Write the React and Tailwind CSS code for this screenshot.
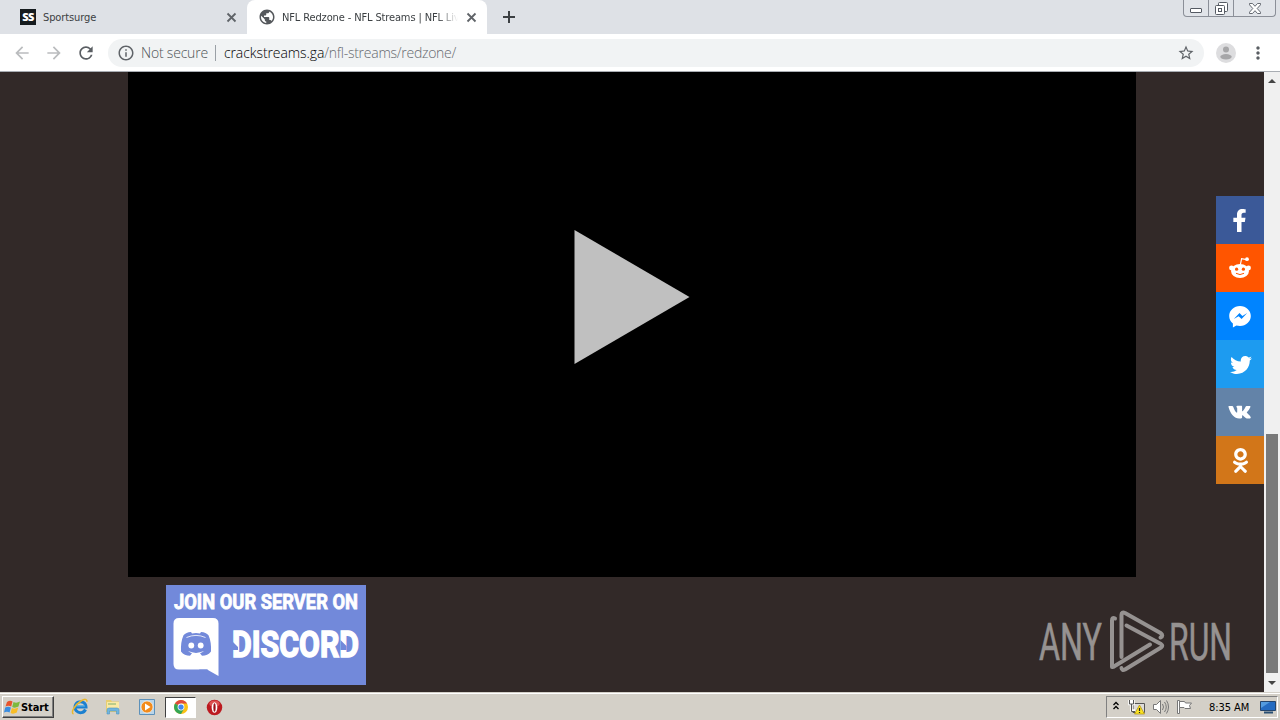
import { FaFacebookF, FaOdnoklassniki, FaTwitter } from "react-icons/fa";
import { MdArrowBack, MdArrowForward, MdInfoOutline, MdMoreVert, MdPublic, MdRefresh, MdStarBorder } from "react-icons/md";

function CloseIcon() {
  return (
    <svg viewBox="0 0 13 13" className="ml-auto h-[13px] w-[13px] shrink-0" stroke="#5f6368" strokeWidth="1.800">
      <path d="M2.500 2.500l8 8M10.500 2.500l-8 8" />
    </svg>
  );
}

function RedditIcon() {
  return (
    <svg viewBox="0 0 24 24" className="h-6 w-6" fill="#fff">
      <ellipse cx="12" cy="15" rx="9" ry="7" />
      <circle cx="3.500" cy="12" r="2.400" />
      <circle cx="20.500" cy="12" r="2.400" />
      <circle cx="19" cy="3.200" r="1.900" />
      <path d="M12.300 9l1.300-6.300 5 1" fill="none" stroke="#fff" strokeWidth="1.200" />
      <circle cx="8.600" cy="13.200" r="1.600" fill="#ff5500" />
      <circle cx="15.400" cy="13.200" r="1.600" fill="#ff5500" />
      <path d="M8.300 17.500q3.700 2.400 7.400 0" fill="none" stroke="#ff5500" strokeLinecap="round" />
    </svg>
  );
}

function MessengerIcon() {
  return (
    <svg viewBox="0 0 24 24" className="h-6 w-6">
      <path d="M12 2C6 2 1.200 6.500 1.200 12c0 3 1.400 5.700 3.700 7.500v4l3.500-2c1.100.3 2.400.5 3.600.5 6 0 10.800-4.500 10.800-10S18 2 12 2z" fill="#fff" />
      <path d="M5.800 15l5.700-6 2.900 2.900L19.200 9l-5.600 6.100-3-2.900z" fill="#0084ff" />
    </svg>
  );
}

function VkIcon() {
  return (
    <svg viewBox="0 0 24 14" className="h-[14px] w-6">
      <path
        fill="#fff"
        d="M12.9 13.4h-1.8C6.500 13.400 2.700 9.500.5 2c-.1-.5.100-.9.700-.9h3c.5 0 .8.200 1 .7 1 2.900 2.200 4.900 3.300 5.700.4.300.7.100.7-.5V3.600c0-1-.4-1.300-1-1.600.2-.8 1-1.300 2-1.300h3c.7 0 .9.400.9 1.100v3.900c0 .5.400.6.800.2 1.100-1.100 2-2.500 2.700-4.100.2-.5.500-.7 1-.7h3c.8 0 1 .4.700 1.100-.7 1.600-1.800 3.200-3.200 4.800-.4.500-.3.700 0 1.100 1.300 1.200 2.800 2.500 3.500 3.900.4.800.1 1.400-.8 1.400h-3.100c-.7 0-1.100-.3-1.600-.8l-1.900-1.900c-.6-.6-1.100-.5-1.100.3v1.300c0 .7-.3 1.100-1.200 1.100z"
      />
    </svg>
  );
}

const shareLinks = [
  { name: "Facebook", color: "bg-[#3b5998]", icon: <FaFacebookF size={23} className="mr-[2px]" /> },
  { name: "Reddit", color: "bg-[#ff5500]", icon: <RedditIcon /> },
  { name: "Messenger", color: "bg-[#0084ff]", icon: <MessengerIcon /> },
  { name: "Twitter", color: "bg-[#1d9bf0]", icon: <FaTwitter size={22} className="ml-[2px] mt-[2px]" /> },
  { name: "VK", color: "bg-[#6383a8]", icon: <VkIcon /> },
  { name: "Odnoklassniki", color: "bg-[#d27619]", icon: <FaOdnoklassniki size={25} /> },
];

function WindowButtons() {
  return (
    <div className="ml-auto mr-[4px] flex h-[17px] w-[93px] rounded-b-[4px] border border-t-0 border-[#8b8f98] bg-[#e1e4e9]">
      <div className="flex w-[25px] items-end justify-center border-r border-[#8b8f98] pb-[3px]">
        <span className="h-[5px] w-[12px] rounded-[1px] border border-[#555a63] bg-white" />
      </div>
      <div className="flex w-[25px] items-center justify-center border-r border-[#8b8f98]">
        <svg viewBox="0 0 13 13" className="h-[13px] w-[13px]" fill="#fff" stroke="#555a63">
          <rect x="3.500" y="0.500" width="9" height="9" rx="1" />
          <rect x="0.500" y="3.500" width="9" height="9" rx="1" />
          <rect x="3.500" y="6.500" width="3" height="3" />
        </svg>
      </div>
      <div className="flex flex-1 items-center justify-center">
        <svg viewBox="0 0 12 11" className="h-[11px] w-3" fill="#fff" stroke="#555a63" strokeWidth="0.9">
          <path d="M.5.5h3L6 3.300 8.500.5h3v1.300L8.200 5.500l3.300 3.700v1.300h-3L6 7.700 3.500 10.500h-3V9.200l3.300-3.700L.5 1.800z" />
        </svg>
      </div>
    </div>
  );
}

function TabStrip() {
  return (
    <div className="flex h-[34px] bg-[#dee1e6] font-['DejaVu_Sans_Condensed','DejaVu_Sans',sans-serif] text-[11px] text-[#3c4043]">
      <div className="flex w-[247px] items-center pl-[20px] pr-[9px]">
        <span className="flex h-4 w-4 items-center justify-center bg-[#151b1e] font-['Open_Sans',sans-serif] text-[11px] font-extrabold tracking-[-0.5px] text-white">SS</span>
        <span className="ml-[7px] pt-[2px] tracking-[-0.1px]">Sportsurge</span>
        <CloseIcon />
      </div>
      <div className="flex w-[240px] items-center rounded-t-[8px] bg-white pl-[11px] pr-[9px]">
        <MdPublic size={18} className="shrink-0 text-[#55585c]" />
        <span className="ml-[6px] w-[176px] whitespace-nowrap pt-[2px] tracking-[-0.13px] [mask-image:linear-gradient(to_right,black_155px,transparent_176px)]">
          NFL Redzone - NFL Streams | NFL Liv
        </span>
        <CloseIcon />
      </div>
      <div className="flex items-center pl-4">
        <svg viewBox="0 0 12 12" className="h-3 w-3" stroke="#3c4043" strokeWidth="2">
          <path d="M6 0v12M0 6h12" />
        </svg>
      </div>
      <WindowButtons />
    </div>
  );
}

function Toolbar() {
  return (
    <div className="flex h-[38px] items-center border-b border-[#a9adb3] bg-white">
      <MdArrowBack size={20} className="ml-[12px] text-[#babcbe]" />
      <MdArrowForward size={20} className="ml-[12px] text-[#babcbe]" />
      <MdRefresh size={20} className="ml-[12px] text-[#5a5e63]" />
      <div className="ml-[12px] flex h-7 w-[1096px] items-center rounded-full bg-[#f1f3f4] pl-[9px] pr-[9px] font-['Open_Sans',sans-serif] text-[14px] font-light">
        <MdInfoOutline size={18} className="text-[#5f6368]" />
        <span className="ml-[6px] -mt-px tracking-[-0.2px] text-[#4f5357]">Not secure</span>
        <span className="ml-[7px] h-4 w-px bg-[#9aa0a6]" />
        <span className="ml-[8px] -mt-px tracking-[-0.26px] text-[#666a6f]">
          <span className="tracking-[-0.08px] text-black">crackstreams.ga</span>/nfl-streams/redzone/
        </span>
        <MdStarBorder size={18} className="ml-auto text-[#5f6368]" />
      </div>
      <svg viewBox="0 0 20 20" className="ml-[12px] h-5 w-5">
        <circle cx="10" cy="10" r="10" fill="#dddddf" />
        <circle cx="10" cy="6.500" r="3" fill="#a6a6a8" />
        <ellipse cx="10" cy="13.800" rx="5.700" ry="2.700" fill="#a6a6a8" />
      </svg>
      <MdMoreVert size={20} className="ml-[12px] text-[#5a5e63]" />
    </div>
  );
}

function DiscordBanner() {
  return (
    <svg viewBox="0 0 200 100" className="ml-[166px] mt-2 h-[100px] w-[200px] overflow-visible bg-[#7289da]">
      <g fill="#fff" stroke="#fff" className="font-['Roboto',sans-serif] font-bold">
        <text x="8" y="24" fontSize="21" strokeWidth="0.800" textLength="184" lengthAdjust="spacingAndGlyphs">JOIN OUR SERVER ON</text>
        <text x="66" y="71.500" fontSize="36" strokeWidth="1.500" textLength="127" lengthAdjust="spacingAndGlyphs">DISCORD</text>
      </g>
      <path fill="#fff" d="M13 33h34q5.500 0 5.500 5.500V91L41 84.500H13q-5.500 0-5.500-5.500V38.500Q7.500 33 13 33z" />
      <path fill="#7289da" d="M39 84.500h2.500L43 87v5l-10-7.500z" />
      {/* mascot */}
      <path
        fill="#7289da"
        d="M25 47q-5 .3-7.500 3.200Q14.500 57 15 66.500q3.300 4.300 9 4.300l2-2.600q-2.400-.7-4-2.100 8 3.600 16 0-1.600 1.400-4 2.100l2 2.600q5.700 0 9-4.300.5-9.500-2.500-16.300Q40 47.300 35 47l-1 1.400q-4-.6-8 0z"
      />
      <path d="M20.500 52.500q9.500-4.200 19 0" fill="none" stroke="#fff" strokeWidth=".8" />
      <circle cx="25.300" cy="60.500" r="2.900" fill="#fff" />
      <circle cx="34.700" cy="60.500" r="2.900" fill="#fff" />
      {/* stencil cuts in the first and last letter */}
      <path fill="#7289da" d="M65 55l7 7v3h-7zM174.500 55l6 6v4h-6z" />
    </svg>
  );
}

function AnyRunLogo() {
  return (
    <svg viewBox="0 0 194 64" className="ml-auto mr-[32px] mt-[33px] h-16 w-[194px] overflow-visible" fill="none" stroke="#969291">
      <g fill="#969291" strokeWidth="0.600" className="font-['Roboto',sans-serif]" fontSize="52">
        <text x="1" y="49.500" textLength="63" lengthAdjust="spacingAndGlyphs">ANY</text>
        <text x="131" y="49.500" textLength="63" lengthAdjust="spacingAndGlyphs">RUN</text>
      </g>
      <g strokeWidth="4" strokeLinecap="round" strokeLinejoin="round">
        <path d="M77 8.500q-3-1.500-3 2V57l1.500-.3L112 34.500" />
        <path d="M83.500 47V5q0-3.500 3.500-2l35.500 20q3.500 2.500 0 4.500" />
        <path d="M88.500 15.500L123 34q2.500 1.800 0 3.500L87 59.500q-3 1.500-3.500-1.500" />
      </g>
    </svg>
  );
}

function Scrollbar() {
  return (
    <div className="flex w-4 flex-col items-center bg-[#f0f0f0]">
      <svg viewBox="0 0 16 17" className="h-[17px] w-4">
        <path d="M4 11l4-4 4 4z" fill="#454545" />
      </svg>
      <div className="mt-[345px] h-[239px] w-3 bg-[#797979]" />
      <svg viewBox="0 0 16 17" className="mt-[2px] h-[17px] w-4">
        <path d="M4 6l4 4 4-4z" fill="#454545" />
      </svg>
    </div>
  );
}

function WebPage() {
  return (
    <main className="relative flex h-[620px] bg-[#322928]">
      <div className="w-[1264px]">
        <div className="ml-[128px] flex h-[505px] w-[1008px] bg-black">
          <svg viewBox="0 0 116 134" className="ml-[446px] mt-[158px] h-[134px] w-[116px]">
            <path d="M.5 0L115.500 67 .5 134z" fill="#c0c0c0" />
          </svg>
        </div>
        <div className="flex">
          <DiscordBanner />
          <AnyRunLogo />
        </div>
      </div>
      <div className="absolute right-4 top-[124px] w-12 text-white">
        {shareLinks.map((link) => (
          <a key={link.name} aria-label={link.name} className={`flex h-12 w-12 items-center justify-center ${link.color}`}>
            {link.icon}
          </a>
        ))}
      </div>
      <Scrollbar />
    </main>
  );
}

function WindowsFlag() {
  return (
    <svg viewBox="0 0 17 16" className="h-4 w-[17px]">
      <path d="M3 3q3-2 5.500-.5L7.200 7.500Q4.500 6 1.500 7.500z" fill="#e8542c" />
      <path d="M9.500 3q3 1.500 6.500-.5l-1.500 5q-3.500 2-6.300.5z" fill="#7db93c" />
      <path d="M1.200 8.500q3-1.500 5.700 0L5.600 13.500Q3 12 0 13.500z" fill="#3b8de0" />
      <path d="M7.900 9q3 1.500 6.300-.5l-1.400 5q-3.500 2-6.200.5z" fill="#f8bd26" />
    </svg>
  );
}

function QuickLaunch() {
  return (
    <div className="flex items-center">
      <svg viewBox="0 0 18 18" className="ml-[17px] h-[18px] w-[18px]" fill="none">
        <path d="M14.500 11.500A5.500 5.500 0 1 1 15 9H5" stroke="#1c80d0" strokeWidth="3" />
        <path d="M14 8H5.500A4.500 4.500 0 0 1 9 4.500" stroke="#57b7ee" />
        <path d="M2.500 16C-1 14.500 4.500 6.500 10 3c3.500-2.300 6-2.300 6 .8" stroke="#e9b72e" strokeWidth="1.500" />
      </svg>
      <svg viewBox="0 0 18 18" className="ml-[15px] h-[18px] w-[18px]">
        <path d="M2 2h5l1 1.500h7V14H2z" fill="#e8ce70" />
        <path d="M3 4h12v9H3z" fill="#fae9a4" />
        <path d="M4 6h8" stroke="#7caf71" />
        <path d="M3 16v-4q0-2 2-2h8q2 0 2 2v4h-2.500v-3h-7v3z" fill="#71b5de" stroke="#4a94c3" strokeWidth=".6" />
      </svg>
      <svg viewBox="0 0 18 18" className="ml-[16px] h-[18px] w-[18px]">
        <path d="M1.500 1.500h15v15h-15z" fill="#b9d5e9" stroke="#5d91ba" />
        <circle cx="9" cy="9" r="6" fill="#f28b1c" stroke="#fff" strokeWidth=".6" />
        <path d="M7 5.500L12.500 9 7 12.500z" fill="#fff" />
      </svg>
      <div className="ml-[9px] flex h-[21px] w-[31px] items-center justify-center border border-b-white border-l-[#404040] border-r-white border-t-[#404040] bg-white">
        <svg viewBox="0 0 16 16" className="h-[14px] w-[14px]">
          <circle cx="8" cy="8" r="8" fill="#fbc116" />
          <path d="M8 8L1.100 4A8 8 0 0 1 14.900 4H8z" fill="#df493d" />
          <path d="M8 8L1.100 4A8 8 0 0 0 8 16l3.500-6z" fill="#34a655" />
          <circle cx="8" cy="8" r="3.900" fill="#fff" />
          <circle cx="8" cy="8" r="3" fill="#4386ee" />
        </svg>
      </div>
      <svg viewBox="0 0 18 18" className="ml-[10px] h-[17px] w-[17px]">
        <circle cx="9" cy="9" r="8.200" fill="#bc1a20" />
        <ellipse cx="9" cy="5" rx="5.500" ry="3.500" fill="#dc5150" />
        <ellipse cx="9" cy="9" rx="3" ry="5.500" fill="#fff" />
        <ellipse cx="9" cy="9" rx="1.200" ry="4.500" fill="#9b1118" />
      </svg>
    </div>
  );
}

function SystemTray() {
  return (
    <div className="ml-auto mr-[2px] flex h-[22px] w-[172px] items-center border border-b-white border-l-[#808080] border-r-white border-t-[#808080]">
      <svg viewBox="0 0 8 9" className="mb-[4px] ml-[5px] h-[9px] w-2" fill="none" stroke="#000" strokeWidth="1.300">
        <path d="M1.500 4L4 1.500 6.500 4M1.500 8L4 5.500 6.500 8" />
      </svg>
      <svg viewBox="0 0 18 16" className="ml-[8px] h-4 w-[18px]">
        <path d="M5 4.500h11.500v9H5z" fill="#dedcda" stroke="#555" />
        <path d="M1.500 1v4h4V1M3.500 1v10.500H7" fill="none" stroke="#fff" strokeWidth="2.500" />
        <path d="M1.500 1v4h4V1M3.500 5v7.500H7" fill="none" stroke="#555" />
        <path d="M11.500 6l5 9h-10z" fill="#fbe322" stroke="#ac8d0e" strokeWidth=".7" />
        <path d="M11.500 9v3M11.500 13v1" stroke="#222" strokeWidth="1.200" />
      </svg>
      <svg viewBox="0 0 18 16" className="ml-[6px] h-4 w-[18px]" fill="none" stroke="#777">
        <path d="M1.500 5.500h3l4-4v13l-4-4h-3z" fill="#fff" />
        <path d="M10.500 5q2 3 0 6M12.500 3q3.500 5 0 10M14.500 1.500q4 6.500 0 13" />
      </svg>
      <svg viewBox="0 0 17 16" className="ml-[6px] h-4 w-[17px]" fill="#fff" stroke="#777">
        <path d="M1.500 1.500h2v13h-2z" />
        <path d="M3.500 2.500h5l1 1.500h6l-2 2.500 1 3H9L8 8.500H3.500z" />
      </svg>
      <span className="ml-[16px] whitespace-nowrap pt-[2px] font-['DejaVu_Sans_Condensed','DejaVu_Sans',sans-serif] text-[11px] tracking-[-0.05px] text-black">8:35 AM</span>
      <svg viewBox="0 0 16 14" className="ml-auto mr-px h-[14px] w-4">
        <path d="M.5 1.500h15v9H.5z" fill="#246bc1" stroke="#24456d" />
        <path d="M1 2h9L1 8z" fill="#539bdf" />
        <path d="M4 12.500h9" stroke="#294f73" strokeWidth="2" />
      </svg>
    </div>
  );
}

function Taskbar() {
  return (
    <footer className="flex h-7 items-center border-t border-[#d4d0c8] bg-[#d4d0c8] pt-px shadow-[inset_0_1px_0_#fff]">
      <div className="ml-[2px] flex h-[22px] w-[52px] items-center border border-b-[#404040] border-l-white border-r-[#404040] border-t-white pl-px shadow-[inset_-1px_-1px_0_#808080]">
        <WindowsFlag />
        <span className="pt-[2px] font-['DejaVu_Sans_Condensed','DejaVu_Sans',sans-serif] text-[11px] font-bold tracking-[-0.1px] text-black">Start</span>
      </div>
      <QuickLaunch />
      <SystemTray />
    </footer>
  );
}

export default function App() {
  return (
    <div className="h-[720px] w-[1280px] overflow-hidden">
      <TabStrip />
      <Toolbar />
      <WebPage />
      <Taskbar />
    </div>
  );
}
